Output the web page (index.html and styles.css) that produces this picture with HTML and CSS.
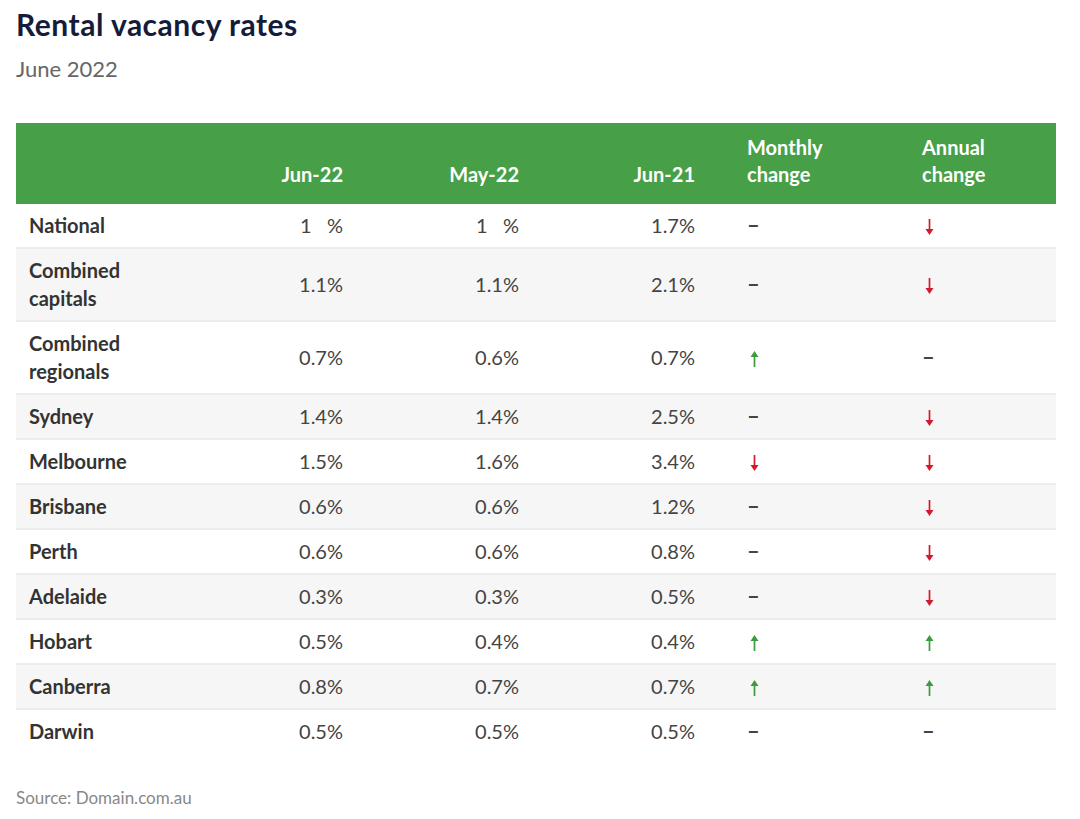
FILE: index.html
```html
<!DOCTYPE html>
<html lang="en">
<head>
<meta charset="utf-8">
<title>Rental vacancy rates</title>
<link rel="stylesheet" href="styles.css">
</head>
<body>
<div class="page">
  <h1 class="title">Rental vacancy rates</h1>
  <p class="subtitle">June 2022</p>
  <table class="rates">
    <colgroup>
      <col class="c-label"><col class="c-num"><col class="c-num"><col class="c-num"><col class="c-m"><col class="c-a">
    </colgroup>
    <thead>
      <tr>
        <th></th>
        <th class="num">Jun-22</th>
        <th class="num">May-22</th>
        <th class="num">Jun-21</th>
        <th class="chg">Monthly<br>change</th>
        <th class="chg">Annual<br>change</th>
      </tr>
    </thead>
    <tbody>
      <tr><td class="lbl">National</td><td class="num">1&nbsp;&nbsp;&nbsp;%</td><td class="num">1&nbsp;&nbsp;&nbsp;%</td><td class="num">1.7%</td><td class="chg"><span class="dash">–</span></td><td class="chg"><span class="ar down"><svg viewBox="0 0 8 16"><path d="M4 0v11"/><path class="h" d="M0 10h8l-4 6z"/></svg></span></td></tr>
      <tr class="alt"><td class="lbl">Combined capitals</td><td class="num">1.1%</td><td class="num">1.1%</td><td class="num">2.1%</td><td class="chg"><span class="dash">–</span></td><td class="chg"><span class="ar down"><svg viewBox="0 0 8 16"><path d="M4 0v11"/><path class="h" d="M0 10h8l-4 6z"/></svg></span></td></tr>
      <tr><td class="lbl">Combined regionals</td><td class="num">0.7%</td><td class="num">0.6%</td><td class="num">0.7%</td><td class="chg"><span class="ar up"><svg viewBox="0 0 8 16"><path d="M4 16V5"/><path class="h" d="M0 6h8l-4-6z"/></svg></span></td><td class="chg"><span class="dash">–</span></td></tr>
      <tr class="alt"><td class="lbl">Sydney</td><td class="num">1.4%</td><td class="num">1.4%</td><td class="num">2.5%</td><td class="chg"><span class="dash">–</span></td><td class="chg"><span class="ar down"><svg viewBox="0 0 8 16"><path d="M4 0v11"/><path class="h" d="M0 10h8l-4 6z"/></svg></span></td></tr>
      <tr><td class="lbl">Melbourne</td><td class="num">1.5%</td><td class="num">1.6%</td><td class="num">3.4%</td><td class="chg"><span class="ar down"><svg viewBox="0 0 8 16"><path d="M4 0v11"/><path class="h" d="M0 10h8l-4 6z"/></svg></span></td><td class="chg"><span class="ar down"><svg viewBox="0 0 8 16"><path d="M4 0v11"/><path class="h" d="M0 10h8l-4 6z"/></svg></span></td></tr>
      <tr class="alt"><td class="lbl">Brisbane</td><td class="num">0.6%</td><td class="num">0.6%</td><td class="num">1.2%</td><td class="chg"><span class="dash">–</span></td><td class="chg"><span class="ar down"><svg viewBox="0 0 8 16"><path d="M4 0v11"/><path class="h" d="M0 10h8l-4 6z"/></svg></span></td></tr>
      <tr><td class="lbl">Perth</td><td class="num">0.6%</td><td class="num">0.6%</td><td class="num">0.8%</td><td class="chg"><span class="dash">–</span></td><td class="chg"><span class="ar down"><svg viewBox="0 0 8 16"><path d="M4 0v11"/><path class="h" d="M0 10h8l-4 6z"/></svg></span></td></tr>
      <tr class="alt"><td class="lbl">Adelaide</td><td class="num">0.3%</td><td class="num">0.3%</td><td class="num">0.5%</td><td class="chg"><span class="dash">–</span></td><td class="chg"><span class="ar down"><svg viewBox="0 0 8 16"><path d="M4 0v11"/><path class="h" d="M0 10h8l-4 6z"/></svg></span></td></tr>
      <tr><td class="lbl">Hobart</td><td class="num">0.5%</td><td class="num">0.4%</td><td class="num">0.4%</td><td class="chg"><span class="ar up"><svg viewBox="0 0 8 16"><path d="M4 16V5"/><path class="h" d="M0 6h8l-4-6z"/></svg></span></td><td class="chg"><span class="ar up"><svg viewBox="0 0 8 16"><path d="M4 16V5"/><path class="h" d="M0 6h8l-4-6z"/></svg></span></td></tr>
      <tr class="alt"><td class="lbl">Canberra</td><td class="num">0.8%</td><td class="num">0.7%</td><td class="num">0.7%</td><td class="chg"><span class="ar up"><svg viewBox="0 0 8 16"><path d="M4 16V5"/><path class="h" d="M0 6h8l-4-6z"/></svg></span></td><td class="chg"><span class="ar up"><svg viewBox="0 0 8 16"><path d="M4 16V5"/><path class="h" d="M0 6h8l-4-6z"/></svg></span></td></tr>
      <tr class="last"><td class="lbl">Darwin</td><td class="num">0.5%</td><td class="num">0.5%</td><td class="num">0.5%</td><td class="chg"><span class="dash">–</span></td><td class="chg"><span class="dash">–</span></td></tr>
    </tbody>
  </table>
  <p class="source">Source: Domain.com.au</p>
</div>
</body>
</html>
```

FILE: styles.css
```css
html, body {
  margin: 0;
  padding: 0;
  background: #ffffff;
}
body {
  font-family: "Lato", "Open Sans", sans-serif;
  color: #333;
}
.page {
  padding: 6px 24px 0 16px;
}
.title {
  margin: 0;
  font-size: 30px;
  line-height: 36px;
  font-weight: 700;
  color: #141c3a;
  letter-spacing: 0.5px;
}
.subtitle {
  margin: 14px 0 0;
  font-size: 22px;
  line-height: 26px;
  color: #666;
}
.rates {
  margin-top: 41px;
  width: 1040px;
  border-collapse: collapse;
  table-layout: fixed;
  font-size: 20px;
}
.c-label { width: 164px; }
.c-num { width: 176px; }
.c-m { width: 175px; }
.c-a { width: 173px; }
.rates thead tr {
  background: #47a047;
}
.rates th {
  color: #fff;
  font-weight: 700;
  line-height: 27px;
  height: 81px;
  box-sizing: border-box;
  padding: 8px 13px 16px;
  vertical-align: bottom;
  text-align: left;
}
.rates th.num { text-align: right; }
.rates td {
  line-height: 28px;
  padding: 7px 13px 8px;
  border-bottom: 2px solid #ececec;
  vertical-align: middle;
  color: #444;
}
.rates tr.last td { border-bottom: none; }
.rates tr.alt { background: #f6f6f6; }
.rates td.lbl {
  font-weight: 700;
  color: #333;
}
.rates td.num { text-align: right; }
.rates .chg { padding-left: 39px; }
.dash {
  display: inline-block;
  color: #444;
  font-size: 22px;
  font-weight: 700;
  padding-left: 0;
}
.ar {
  display: inline-block;
  width: 9px;
  height: 16px;
  margin-left: 3px;
  vertical-align: -2px;
}
.ar svg {
  display: block;
  width: 9px;
  height: 16px;
  overflow: visible;
}
.ar path {
  fill: none;
  stroke-width: 1.7;
}
.ar path.h { stroke: none; }
.ar.down path { stroke: #d3192b; }
.ar.down path.h { fill: #d3192b; stroke: none; }
.ar.up path { stroke: #3e9a3e; }
.ar.up path.h { fill: #3e9a3e; stroke: none; }
.source {
  margin: 35px 0 0;
  font-size: 17px;
  line-height: 20px;
  color: #888;
}
```
